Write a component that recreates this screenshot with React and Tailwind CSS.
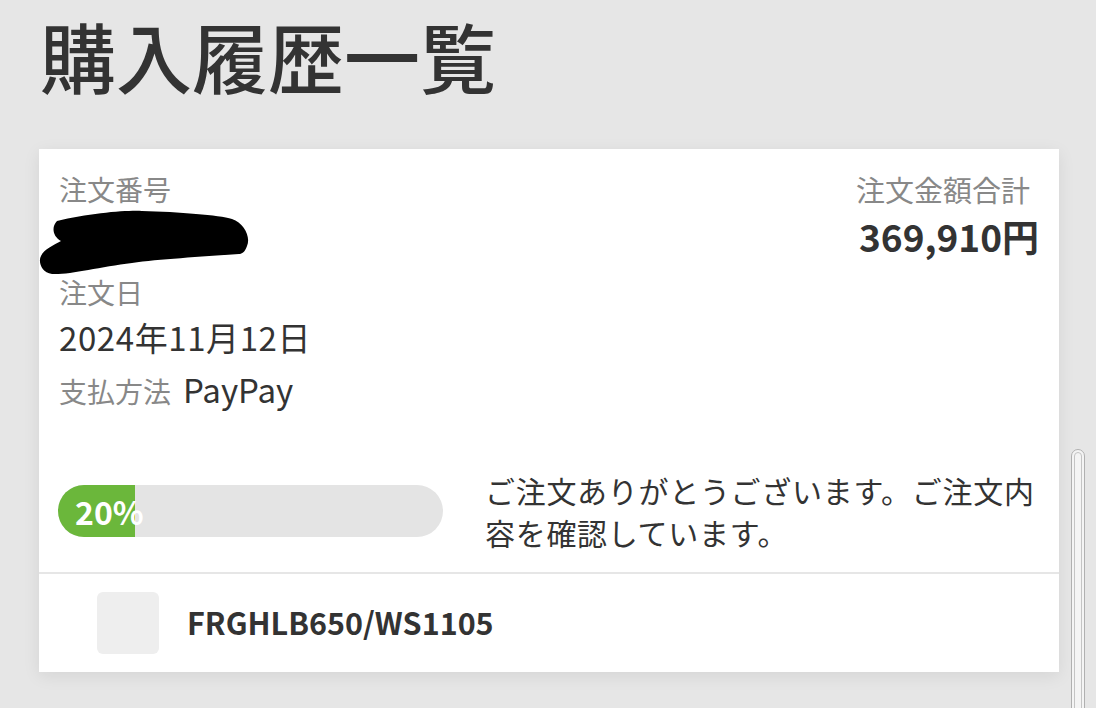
import React from 'react';

const FONT = { fontFamily: '"Noto Sans CJK JP", "Noto Sans", sans-serif' };

function Redaction() {
  // hand-drawn black marker over the order number
  return (
    <svg width="212" height="68" viewBox="-2 0 212 68" className="block -ml-[22px]">
      <path
        d="M18 12 C50 4 90 1 103 2 C140 3 180 6 193 10 C205 14 212 28 208 37 C206 43 203 45 200 45 C160 48 120 50 93 54 C60 58 30 66 13 65 C2 64 -1 52 2 47 C5 40 15 36 22 32 C14 28 12 18 18 12 Z"
        fill="#000"
      />
    </svg>
  );
}

function ProgressBar({ percent }) {
  return (
    <div className="relative w-[385px] h-[52px] rounded-full bg-[#e4e4e4] overflow-hidden shrink-0">
      <div className="h-full bg-[#6bb73b]" style={{ width: `${percent}%` }} />
      <span className="absolute left-[17px] top-0 h-full flex items-center text-[32px] font-bold text-white leading-none">
        {percent}%
      </span>
    </div>
  );
}

export default function App() {
  return (
    <div className="min-h-screen bg-[#e6e6e6] text-[#333] overflow-hidden" style={FONT}>
      <h1 className="pl-[40px] pt-[10px] text-[76px] font-medium leading-[90px] h-[149px]">
        購入履歴一覧
      </h1>

      <div className="mx-[39px] w-[1020px] bg-white shadow-[0_4px_16px_rgba(0,0,0,0.08)]">
        {/* Order summary */}
        <div className="flex justify-between pl-[20px] pr-[20px] pt-[20px]">
          <div>
            <div className="text-[28px] leading-[40px] text-[#888]">注文番号</div>
            <div className="h-[63px]">
              <Redaction />
            </div>
            <div className="text-[28px] leading-[40px] text-[#888]">注文日</div>
            <div className="mt-[2px] text-[33px] leading-[46px] tracking-[0.6px]">2024年11月12日</div>
            <div className="mt-[9px] text-[28px] leading-[40px]">
              <span className="text-[#888]">支払方法</span>
              <span className="ml-[12px] text-[33px] text-[#333]">PayPay</span>
            </div>
          </div>
          <div className="text-right">
            <div className="text-[29px] leading-[40px] text-[#888] pr-[9px]">注文金額合計</div>
            <div className="mt-[4px] text-[37px] leading-[46px] font-bold">369,910円</div>
          </div>
        </div>

        {/* Status */}
        <div className="flex items-center gap-[42px] pl-[19px] pr-[16px] mt-[58px] pb-[19px]">
          <ProgressBar percent={20} />
          <p className="flex-1 text-[30px] leading-[42px] tracking-[0.7px]">
            ご注文ありがとうございます。ご注文内容を確認しています。
          </p>
        </div>

        {/* Items */}
        <div className="border-t-2 border-[#e6e6e6] h-[100px] flex items-center pl-[58px] gap-[28px]">
          <div className="w-[62px] h-[62px] rounded-md bg-[#eeeeee]" />
          <div className="text-[30.5px] font-bold">FRGHLB650/WS1105</div>
        </div>
      </div>

      {/* overlay scrollbar */}
      <div className="fixed right-[11px] top-[449px] w-[14px] h-[300px] rounded-full border border-[#b0b0b0] bg-[#f4f4f4] p-[2px]">
        <div className="w-full h-full rounded-full border border-[#c4c4c4]" />
      </div>
    </div>
  );
}
